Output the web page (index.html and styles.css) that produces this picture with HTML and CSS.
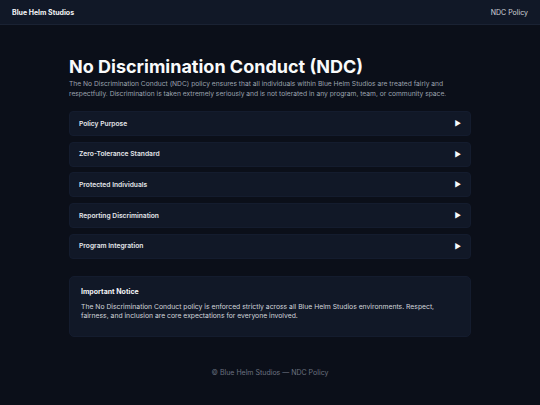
FILE: index.html
```html
<!DOCTYPE html>
<html lang="en">
<head>
<meta charset="utf-8">
<title>NDC Policy</title>
<link rel="stylesheet" href="styles.css">
</head>
<body>
<header class="topbar">
  <div class="brand">Blue Helm Studios</div>
  <nav class="nav">NDC Policy</nav>
</header>
<main class="main">
  <h1 class="title">No Discrimination Conduct (NDC)</h1>
  <p class="intro">The No Discrimination Conduct (NDC) policy ensures that all individuals within Blue Helm Studios are treated fairly and respectfully. Discrimination is taken extremely seriously and is not tolerated in any program, team, or community space.</p>
  <div class="accordion">
    <div class="item"><span>Policy Purpose</span><span class="arrow">&#9654;</span></div>
    <div class="item"><span>Zero-Tolerance Standard</span><span class="arrow">&#9654;</span></div>
    <div class="item"><span>Protected Individuals</span><span class="arrow">&#9654;</span></div>
    <div class="item"><span>Reporting Discrimination</span><span class="arrow">&#9654;</span></div>
    <div class="item"><span>Program Integration</span><span class="arrow">&#9654;</span></div>
  </div>
  <section class="notice">
    <h2 class="notice-title">Important Notice</h2>
    <p class="notice-text">The No Discrimination Conduct policy is enforced strictly across all Blue Helm Studios environments. Respect, fairness, and inclusion are core expectations for everyone involved.</p>
  </section>
</main>
<footer class="footer">© Blue Helm Studios — NDC Policy</footer>
</body>
</html>
```
FILE: styles.css
```css
* { box-sizing: border-box; }
html, body { margin: 0; padding: 0; }
body {
  background: #0b0f19;
  color: #e5e7eb;
  font-family: Inter, "Noto Sans", sans-serif;
  min-height: 405px;
}
.topbar {
  height: 25px;
  background: #111827;
  border-bottom: 1px solid #1a2233;
  display: flex;
  align-items: center;
  justify-content: space-between;
  padding: 0 12px;
  font-size: 7px;
}
.brand { font-weight: 700; color: #f3f4f6; }
.nav { color: #d1d5db; }
.main {
  width: 402px;
  margin: 0 auto;
  padding-top: 31px;
}
.title {
  margin: 0;
  font-size: 18px;
  line-height: 22px;
  font-weight: 700;
  color: #f9fafb;
}
.intro {
  margin: 2px 0 0;
  font-size: 6.7px;
  line-height: 9.5px;
  color: #9ca3af;
}
.accordion {
  margin-top: 12px;
  display: flex;
  flex-direction: column;
  gap: 5.7px;
}
.item {
  height: 25px;
  background: #111827;
  border: 1px solid #141c2e;
  border-radius: 4px;
  display: flex;
  align-items: center;
  justify-content: space-between;
  padding: 0 9px;
  font-size: 6.7px;
  font-weight: 600;
  color: #e5e7eb;
}
.arrow { font-size: 7px; color: #f9fafb; }
.notice {
  margin-top: 17px;
  background: #111827;
  border: 1px solid #141c2e;
  border-radius: 5px;
  padding: 10px 11px 12px;
  height: 61px;
}
.notice-title {
  margin: 0;
  font-size: 7px;
  line-height: 9px;
  font-weight: 700;
  color: #f3f4f6;
}
.notice-text {
  margin: 6px 0 0;
  font-size: 6.8px;
  line-height: 9.5px;
  color: #d1d5db;
}
.footer {
  text-align: center;
  margin-top: 31px;
  font-size: 7px;
  color: #6b7280;
}
```
